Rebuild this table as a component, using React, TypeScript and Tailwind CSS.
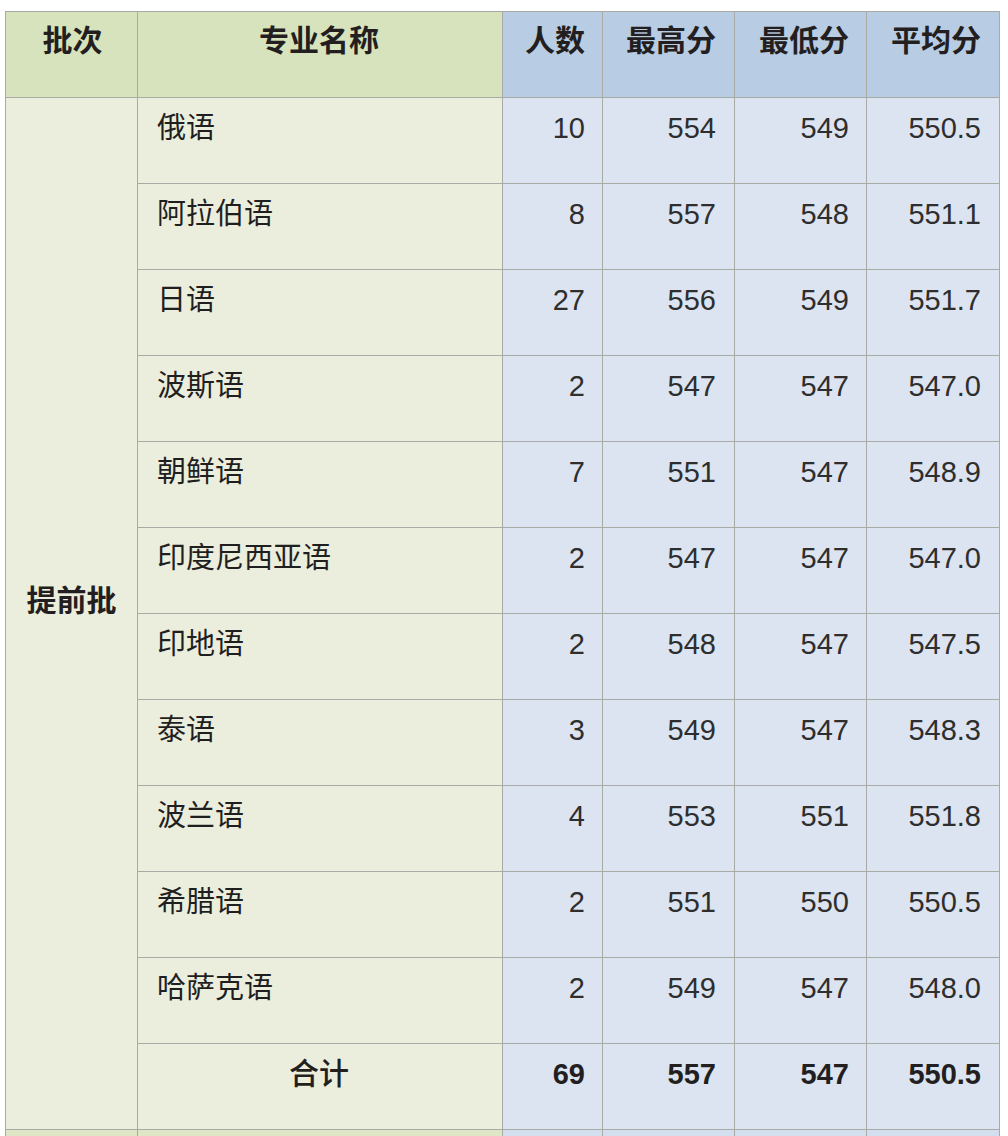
import React from "react";

const rows: [string, string, string, string, string][] = [
  ["俄语", "10", "554", "549", "550.5"],
  ["阿拉伯语", "8", "557", "548", "551.1"],
  ["日语", "27", "556", "549", "551.7"],
  ["波斯语", "2", "547", "547", "547.0"],
  ["朝鲜语", "7", "551", "547", "548.9"],
  ["印度尼西亚语", "2", "547", "547", "547.0"],
  ["印地语", "2", "548", "547", "547.5"],
  ["泰语", "3", "549", "547", "548.3"],
  ["波兰语", "4", "553", "551", "551.8"],
  ["希腊语", "2", "551", "550", "550.5"],
  ["哈萨克语", "2", "549", "547", "548.0"],
];

const cjk = "font-['Noto_Sans_CJK_SC','Noto_Sans',sans-serif]";
const num = "font-['Liberation_Sans','Arial',sans-serif]";

export default function App() {
  return (
    <div className="bg-white w-[1008px] h-[1136px] overflow-hidden pt-[11px] pl-[5px]">
      <div className="grid grid-cols-[131px_364px_99px_131px_131px_132px] grid-rows-[85px_repeat(12,85px)_40px] gap-px bg-[#a8aaa6] border border-[#a8aaa6] w-[995px] text-[#231f20]">
        {/* header */}
        <div className={`bg-[#d7e3bc] ${cjk} font-bold text-[30px] leading-[36px] text-center pt-[8px] pl-[2px]`}>批次</div>
        <div className={`bg-[#d7e3bc] ${cjk} font-bold text-[30px] leading-[36px] text-center pt-[8px] pr-[2px]`}>专业名称</div>
        <div className={`bg-[#b8cce3] ${cjk} font-bold text-[30px] leading-[36px] text-right pt-[8px] pr-[17px]`}>人数</div>
        <div className={`bg-[#b8cce3] ${cjk} font-bold text-[30px] leading-[36px] text-right pt-[8px] pr-[18px]`}>最高分</div>
        <div className={`bg-[#b8cce3] ${cjk} font-bold text-[30px] leading-[36px] text-right pt-[8px] pr-[17px]`}>最低分</div>
        <div className={`bg-[#b8cce3] ${cjk} font-bold text-[30px] leading-[36px] text-right pt-[8px] pr-[18px]`}>平均分</div>

        {/* batch cell spanning */}
        <div className={`bg-[#ebeddd] row-start-2 row-span-12 col-start-1 flex items-center justify-center pb-[32px] ${cjk} font-bold text-[30px] leading-[36px]`}>
          提前批
        </div>

        {rows.map((r, i) => (
          <React.Fragment key={i}>
            <div className={`bg-[#ebeddd] col-start-2 ${cjk} text-[29px] leading-[36px] pt-[9px] pl-[19px] text-[#1f1f1f]`}>{r[0]}</div>
            <div className={`bg-[#dbe4f0] ${num} text-[29px] leading-[36px] text-right pt-[12px] pr-[17px] text-[#2e2e2e]`}>{r[1]}</div>
            <div className={`bg-[#dbe4f0] ${num} text-[29px] leading-[36px] text-right pt-[12px] pr-[18px] text-[#2e2e2e]`}>{r[2]}</div>
            <div className={`bg-[#dbe4f0] ${num} text-[29px] leading-[36px] text-right pt-[12px] pr-[17px] text-[#2e2e2e]`}>{r[3]}</div>
            <div className={`bg-[#dbe4f0] ${num} text-[29px] leading-[36px] text-right pt-[12px] pr-[18px] text-[#2e2e2e]`}>{r[4]}</div>
          </React.Fragment>
        ))}

        {/* total row */}
        <div className={`bg-[#ebeddd] col-start-2 ${cjk} font-medium text-[30px] leading-[36px] text-center pt-[9px] pr-[2px]`}>合计</div>
        <div className={`bg-[#dbe4f0] ${num} font-bold text-[29px] leading-[36px] text-right pt-[12px] pr-[17px]`}>69</div>
        <div className={`bg-[#dbe4f0] ${num} font-bold text-[29px] leading-[36px] text-right pt-[12px] pr-[18px]`}>557</div>
        <div className={`bg-[#dbe4f0] ${num} font-bold text-[29px] leading-[36px] text-right pt-[12px] pr-[17px]`}>547</div>
        <div className={`bg-[#dbe4f0] ${num} font-bold text-[29px] leading-[36px] text-right pt-[12px] pr-[18px]`}>550.5</div>

        {/* partial next row */}
        <div className="bg-[#dfe6c6]" />
        <div className="bg-[#dfe6c6]" />
        <div className="bg-[#d3dfee]" />
        <div className="bg-[#d3dfee]" />
        <div className="bg-[#d3dfee]" />
        <div className="bg-[#d3dfee]" />
      </div>
    </div>
  );
}
